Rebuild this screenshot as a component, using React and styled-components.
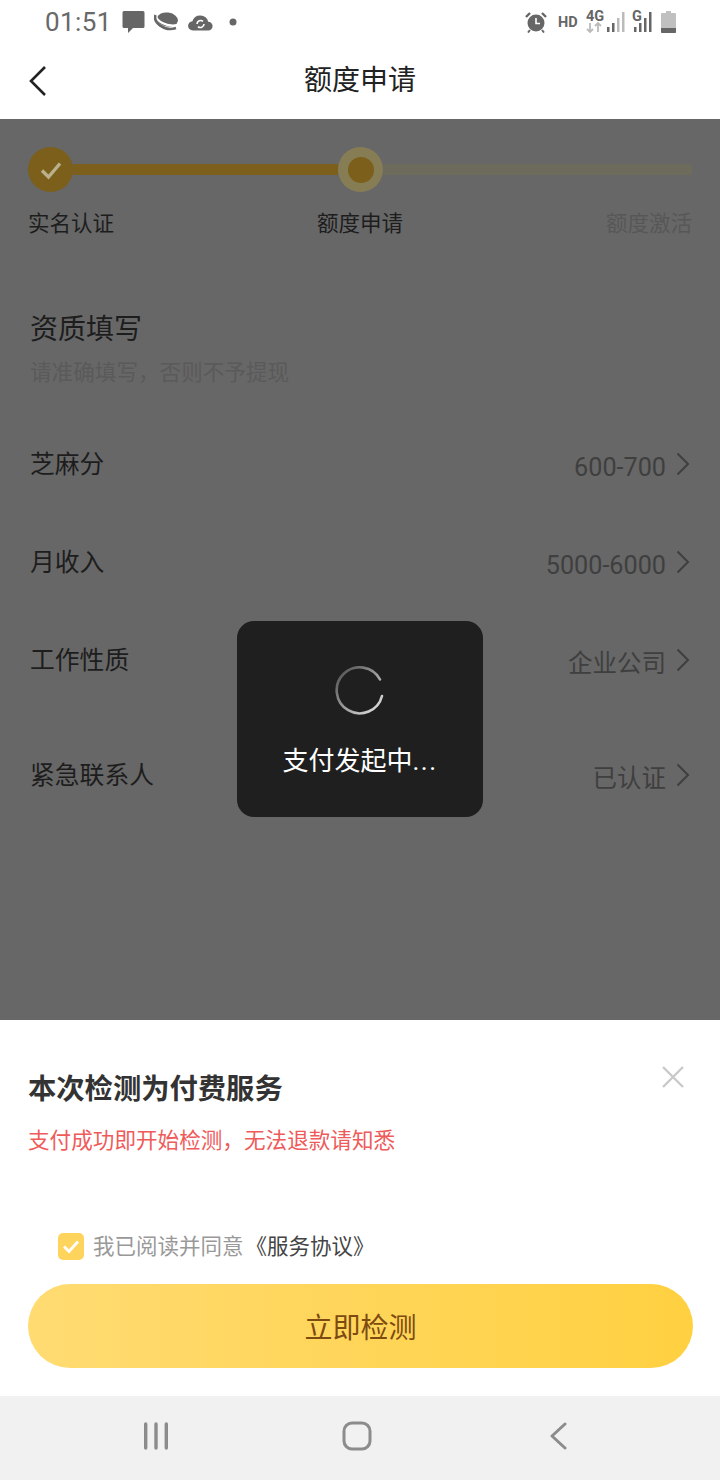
import React from "react";
import styled, { createGlobalStyle } from "styled-components";

const Global = createGlobalStyle`
  html, body { margin: 0; padding: 0; background: #fff; }
  body { font-family: Roboto, "Noto Sans CJK SC", sans-serif; }
  * { box-sizing: border-box; }
`;

const Page = styled.div`
  width: 720px; height: 1480px; display: flex; flex-direction: column; overflow: hidden; background: #fff;
`;

const StatusBar = styled.div`
  height: 44px; display: flex; align-items: center; justify-content: space-between; padding: 0 44px 0 45px;
`;
const StatusLeft = styled.div`
  display: flex; align-items: center; gap: 9px;
`;
const StatusRight = styled.div`
  display: flex; align-items: center;
`;
const Clock = styled.span`
  font-size: 26px; line-height: 44px; color: #686868; letter-spacing: .4px; margin-right: 1px;
`;
const StatusIcon = styled.svg`
  flex: none; margin-left: ${p => p.$ml || 0}px;
`;

const Header = styled.header`
  height: 75px; display: grid; grid-template-columns: 1fr auto 1fr; align-items: center; padding: 0 28px 2px;
`;
const Title = styled.h1`
  margin: 0; font-size: 28px; line-height: 40px; font-weight: 400; color: #222;
`;

const Content = styled.main`
  flex: 1; position: relative; background: #676767; padding-top: 28px;
`;
const Track = styled.div`
  display: flex; align-items: center; padding: 0 28px;
`;
const DoneDot = styled.div`
  width: 45px; height: 45px; border-radius: 50%; background: #7b5f1b; flex: none;
  display: flex; align-items: center; justify-content: center;
`;
const ActiveDot = styled.div`
  width: 45px; height: 45px; border-radius: 50%; background: #877d55; flex: none;
  display: flex; align-items: center; justify-content: center;
`;
const ActiveCore = styled.div`
  width: 26px; height: 26px; border-radius: 50%; background: #7b5f1b;
`;
const DoneLine = styled.div`
  height: 11px; width: 265px; flex: none; background: #7b5f1b;
`;
const TodoLine = styled.div`
  height: 11px; flex: 1; background: #6d6b5c;
`;
const StepLabels = styled.div`
  display: flex; justify-content: space-between; padding: 0 28px; margin-top: 17px;
`;
const StepLabel = styled.span`
  font-size: 21.5px; line-height: 30px; color: ${p => (p.$off ? "#575757" : "#1d1d1d")};
`;

const Section = styled.section`
  padding: 71px 30px 0;
`;
const SectionTitle = styled.h2`
  margin: 0; font-size: 28px; line-height: 40px; font-weight: 400; color: #1d1d1d;
`;
const SectionHint = styled.p`
  margin: 8px 0 28px; font-size: 21.6px; line-height: 30px; color: #5a5a5a;
`;
const Row = styled.div`
  height: 98px; display: flex; align-items: center; justify-content: space-between;
  margin-top: ${p => p.$gap || 0}px;
`;
const RowLabel = styled.span`
  font-size: 24.8px; line-height: 34px; color: #1d1d1d;
`;
const RowValue = styled.div`
  display: flex; align-items: center; gap: 9px; margin-right: -1px;
`;
const ValueText = styled.span`
  font-size: ${p => (p.$cjk ? 24.5 : 25.2)}px; line-height: 34px; color: #3f3f3f; padding-top: 6px;
`;
const Chevron = styled.svg`
  flex: none; margin-top: -2px;
`;

const Toast = styled.div`
  position: absolute; left: 237px; top: 502px; width: 246px; height: 196px; border-radius: 17px;
  background: #1f1f1f; display: flex; flex-direction: column; align-items: center; padding-top: 45px;
`;
const ToastText = styled.span`
  margin-top: 27px; font-size: 26px; line-height: 36px; color: #fff;
`;
const Dots = styled.span`
  letter-spacing: 1.5px;
`;

const Sheet = styled.section`
  position: relative; height: 376px; background: #fff; padding: 50px 27px 0 28px;
`;
const SheetTitle = styled.h2`
  margin: 0; font-size: 28.3px; line-height: 40px; font-weight: 700; color: #333;
`;
const Warning = styled.p`
  margin: 16px 0 0; font-size: 21.6px; line-height: 30px; color: #ef5a5a;
`;
const CloseIcon = styled.svg`
  position: absolute; right: 35px; top: 45px;
`;
const Agreement = styled.div`
  margin-top: 76px; height: 30px; display: flex; align-items: center; padding-left: 30px;
`;
const CheckBox = styled.span`
  width: 26px; height: 27px; border-radius: 5px; background: #ffd45c; display: flex; align-items: center; justify-content: center;
  margin-right: 9px; position: relative; top: -1px;
`;
const AgreeText = styled.span`
  font-size: 21.5px; line-height: 30px; color: #999;
`;
const AgreeLink = styled.span`
  color: #444; margin-left: 2px;
`;
const Action = styled.button`
  display: block; width: 665px; height: 84px; margin-top: 22px; border: 0; border-radius: 42px;
  background: linear-gradient(90deg, #ffdb72 0%, #ffd040 100%);
  font-family: inherit; font-size: 28px; color: #7d4b12;
`;

const NavBar = styled.nav`
  height: 84px; background: #f1f1f1; display: flex; align-items: center; justify-content: space-between; padding: 0 148px 5px 142px;
`;

const RowChevron = () => (
  <Chevron width="16" height="26" viewBox="0 0 16 26" fill="none">
    <path d="M2.5 2.5 13 13 2.5 23.5" stroke="#3f3f3f" strokeWidth="2" />
  </Chevron>
);

const Signal = ({ faded, ml }) => (
  <StatusIcon $ml={ml} width="20" height="22" viewBox="0 0 20 22">
    <rect x="0" y="16" width="2.5" height="5" fill="#666" />
    <rect x="5" y="12" width="2.5" height="9" fill="#666" />
    <rect x="10" y="7" width="2.5" height="14" fill={faded ? "#bbb" : "#666"} />
    <rect x="15" y="1" width="2.5" height="20" fill={faded ? "#bbb" : "#666"} />
  </StatusIcon>
);

const Rows = [
  ["芝麻分", "600-700"],
  ["月收入", "5000-6000"],
  ["工作性质", "企业公司", 0, true],
  ["紧急联系人", "已认证", 17, true],
];

export default function App() {
  return (
    <Page>
      <Global />
      <StatusBar>
        <StatusLeft>
          <Clock>01:51</Clock>
          <StatusIcon width="23" height="24" viewBox="0 0 23 24">
            <path d="M2 1h19a1.5 1.5 0 0 1 1.500 1.500v14a1.500 1.500 0 0 1-1.500 1.500H11l-5 5v-5H2A1.500 1.500 0 0 1 .5 16.500v-14A1.500 1.500 0 0 1 2 1z" fill="#666" />
          </StatusIcon>
          <StatusIcon width="25" height="20" viewBox="0 0 25 20">
            <ellipse cx="13.500" cy="7.500" rx="10.500" ry="7" fill="#666" transform="rotate(8 13.500 7.500)" />
            <path d="M1.500 3c1 6 10 12 22 10" fill="none" stroke="#fff" strokeWidth="2" />
            <path d="M1.500 3C-1 10 10 20 22 16" fill="none" stroke="#666" strokeWidth="2.600" />
          </StatusIcon>
          <StatusIcon width="25" height="18" viewBox="0 0 25 18">
            <path d="M5 17.500a4.600 4.600 0 0 1-.6-9.200 8.200 8.200 0 0 1 15.800.4 4.400 4.400 0 0 1 0 8.800z" fill="#666" />
            <path d="M9 11a3.600 3.600 0 0 1 6-2.600M16 11a3.600 3.600 0 0 1-6 2.600" fill="none" stroke="#fff" strokeWidth="1.600" />
          </StatusIcon>
          <StatusIcon $ml={7} width="8" height="8" viewBox="0 0 8 8">
            <circle cx="4" cy="4" r="3.500" fill="#666" />
          </StatusIcon>
        </StatusLeft>
        <StatusRight>
          <StatusIcon width="22" height="22" viewBox="0 0 22 22">
            <circle cx="11" cy="12" r="8.500" fill="#666" />
            <path d="M11 7v5.500h4" fill="none" stroke="#fff" strokeWidth="1.600" />
            <path d="M1 6l4-4M21 6l-4-4" stroke="#666" strokeWidth="2.400" />
            <path d="M5 19l-2 2.500M17 19l2 2.500" stroke="#666" strokeWidth="2" />
          </StatusIcon>
          <StatusIcon $ml={11} width="20" height="16" viewBox="0 0 20 16">
            <text x="0" y="13" fontFamily="Roboto" fontWeight="700" fontSize="14.500" fill="#666">HD</text>
          </StatusIcon>
          <StatusIcon $ml={8} width="18" height="26" viewBox="0 0 18 26">
            <text x="0" y="12" fontFamily="Roboto" fontWeight="700" fontSize="14.500" fill="#666">4G</text>
            <path d="M4 14v9M1 20l3 3 3-3" fill="none" stroke="#bbb" strokeWidth="1.800" />
            <path d="M12 23v-9M9 17l3-3 3 3" fill="none" stroke="#bbb" strokeWidth="1.800" />
          </StatusIcon>
          <Signal faded ml={3} />
          <StatusIcon $ml={5} width="12" height="26" viewBox="0 0 12 26">
            <text x="0" y="12" fontFamily="Roboto" fontWeight="700" fontSize="14.500" fill="#666">G</text>
          </StatusIcon>
          <Signal ml={-10} />
          <StatusIcon $ml={7} width="15" height="22" viewBox="0 0 15 22">
            <path d="M5 0h5v2h4a1 1 0 0 1 1 1v18a1 1 0 0 1-1 1H1a1 1 0 0 1-1-1V3a1 1 0 0 1 1-1h4z" fill="#c0c0c0" />
            <path d="M0 17h15v4a1 1 0 0 1-1 1H1a1 1 0 0 1-1-1z" fill="#666" />
          </StatusIcon>
        </StatusRight>
      </StatusBar>

      <Header>
        <svg width="20" height="32" viewBox="0 0 20 32" fill="none">
          <path d="M17 2 3 16l14 14" stroke="#222" strokeWidth="2.600" />
        </svg>
        <Title>额度申请</Title>
      </Header>

      <Content>
        <Track>
          <DoneDot>
            <svg width="24" height="20" viewBox="0 0 24 20" fill="none">
              <path d="M3 10.500 9.500 17 21 3.500" stroke="#b9b08c" strokeWidth="3.400" />
            </svg>
          </DoneDot>
          <DoneLine />
          <ActiveDot><ActiveCore /></ActiveDot>
          <TodoLine />
        </Track>
        <StepLabels>
          <StepLabel>实名认证</StepLabel>
          <StepLabel>额度申请</StepLabel>
          <StepLabel $off>额度激活</StepLabel>
        </StepLabels>

        <Section>
          <SectionTitle>资质填写</SectionTitle>
          <SectionHint>请准确填写，否则不予提现</SectionHint>
          {Rows.map(([label, value, gap, cjk]) => (
            <Row key={label} $gap={gap}>
              <RowLabel>{label}</RowLabel>
              <RowValue>
                <ValueText $cjk={cjk}>{value}</ValueText>
                <RowChevron />
              </RowValue>
            </Row>
          ))}
        </Section>

        <Toast>
          <svg width="50" height="50" viewBox="0 0 50 50" fill="none">
            <defs>
              <linearGradient id="sp" x1="0" y1="0" x2="1" y2="1">
                <stop offset="0" stopColor="#4a4a4a" />
                <stop offset="1" stopColor="#e8e8e8" />
              </linearGradient>
            </defs>
            <path d="M47 30A23 23 0 1 1 45 13.500" stroke="url(#sp)" strokeWidth="2.600" strokeLinecap="round" />
          </svg>
          <ToastText>支付发起中<Dots>...</Dots></ToastText>
        </Toast>
      </Content>

      <Sheet>
        <SheetTitle>本次检测为付费服务</SheetTitle>
        <Warning>支付成功即开始检测，无法退款请知悉</Warning>
        <CloseIcon width="24" height="24" viewBox="0 0 24 24" fill="none">
          <path d="M2 2l20 20M22 2 2 22" stroke="#c9c9c9" strokeWidth="2.400" />
        </CloseIcon>
        <Agreement>
          <CheckBox>
            <svg width="18" height="15" viewBox="0 0 18 15" fill="none">
              <path d="M2 7.500 7 12.500 16 2.500" stroke="#fff" strokeWidth="2.800" />
            </svg>
          </CheckBox>
          <AgreeText>我已阅读并同意<AgreeLink>《服务协议》</AgreeLink></AgreeText>
        </Agreement>
        <Action>立即检测</Action>
      </Sheet>

      <NavBar>
        <svg width="28" height="28" viewBox="0 0 28 28">
          <path d="M3.700 2v24M14 2v24M24.300 2v24" stroke="#8c8c8c" strokeWidth="3.400" strokeLinecap="round" />
        </svg>
        <svg width="30" height="30" viewBox="0 0 30 30" fill="none">
          <rect x="2" y="2" width="26" height="26" rx="8" stroke="#8c8c8c" strokeWidth="3" />
        </svg>
        <svg width="28" height="28" viewBox="0 0 28 28" fill="none">
          <path d="M21 2 8 14l13 12" stroke="#8c8c8c" strokeWidth="3" strokeLinecap="round" strokeLinejoin="round" />
        </svg>
      </NavBar>
    </Page>
  );
}
